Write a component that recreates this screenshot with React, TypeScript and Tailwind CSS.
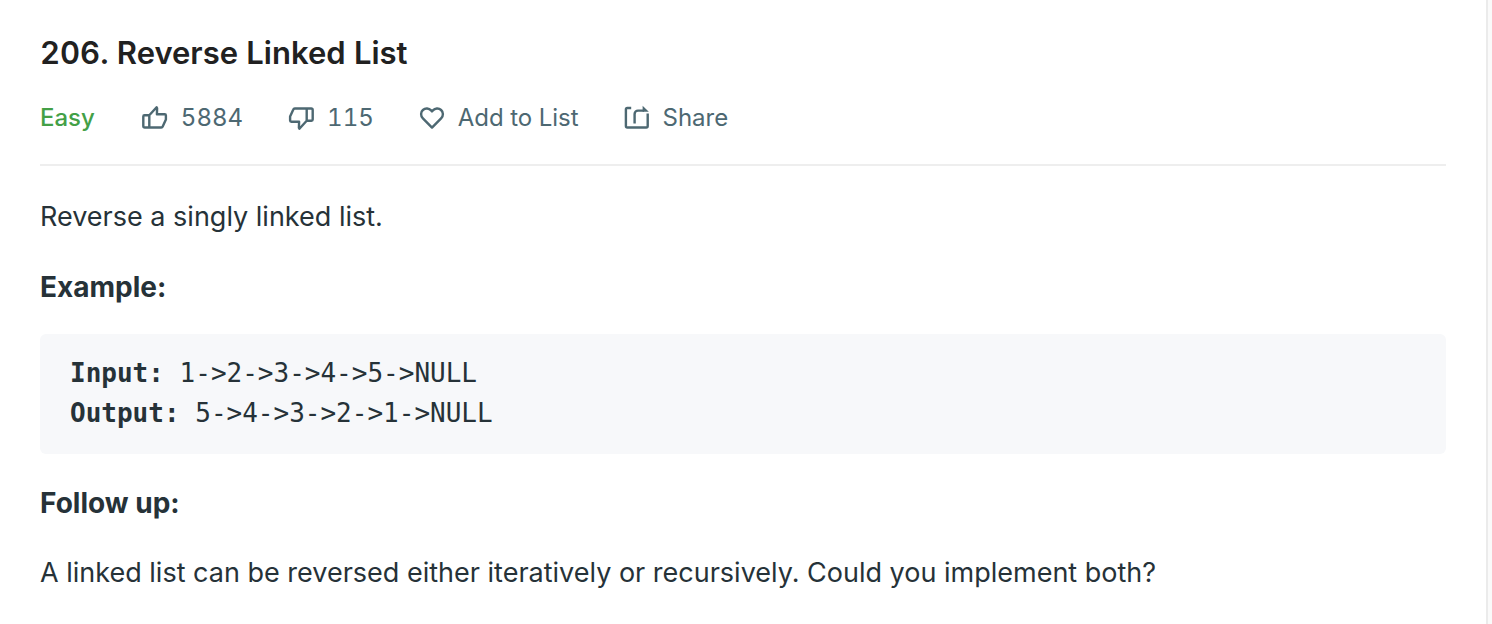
import type { ReactNode } from "react";

function Icon({ children }: { children: ReactNode }) {
  return (
    <svg
      className="size-7 shrink-0"
      viewBox="0 0 28 28"
      fill="none"
      stroke="currentColor"
      strokeWidth="2.4"
      strokeLinejoin="round"
      aria-hidden="true"
    >
      {children}
    </svg>
  );
}

const THUMB =
  "M8.3 11.2H3.5a1.2 1.2 0 0 0-1.2 1.2v9.6a1.5 1.5 0 0 0 1.5 1.5H20.2a1.6 1.6 0 0 0 1.5-1l3.2-7V11.4a1.2 1.2 0 0 0-1.2-1.2H15.9L16.1 4.2 15.6 3.2 8.3 11.2V23.5";

function Action({ label, icon, name }: { label: string; icon: ReactNode; name?: string }) {
  return (
    <button type="button" aria-label={name} className="flex items-center gap-3 text-2xl tabular-nums">
      {icon}
      <span>{label}</span>
    </button>
  );
}

export default function App() {
  return (
    <div className="flex min-h-screen bg-[#fafafa] font-['Inter',sans-serif] text-[#263238]">
      <main className="min-w-0 flex-1 border-r-2 border-[#ebebeb] bg-white px-10 pt-[33px]">
        <h1 className="text-[31px] leading-10 font-semibold text-[#212121] tabular-nums">
          206. Reverse Linked List
        </h1>

        <div className="mt-[27px] flex h-9 items-center text-[#4d6872]">
          <span className="mr-[46px] text-2xl font-medium text-[#43a047]">Easy</span>
          <div className="flex items-center gap-11">
            <Action
              name="Like, 5884"
              label="5884"
              icon={
                <Icon>
                  <path d={THUMB} />
                </Icon>
              }
            />
            <Action
              name="Dislike, 115"
              label="115"
              icon={
                <Icon>
                  <path d={THUMB} transform="rotate(180 14 14)" />
                </Icon>
              }
            />
            <Action
              label="Add to List"
              icon={
                <Icon>
                  <path d="M14 23.6 4.9 14.4C2.4 11.9 2.6 8 4.9 6c2.5-2.2 6.1-1.8 8.2.4l.9 1 .9-1c2.1-2.2 5.7-2.6 8.2-.4 2.3 2 2.5 5.9 0 8.4Z" />
                </Icon>
              }
            />
            <Action
              label="Share"
              icon={
                <Icon>
                  <path d="M8.2 4H4.3a1.4 1.4 0 0 0-1.4 1.4v16.7a1.4 1.4 0 0 0 1.4 1.4h19a1.4 1.4 0 0 0 1.4-1.4V9.6" />
                  <path d="M11.6 19.6V10a3.4 3.4 0 0 1 3.4-3.4h6" />
                  <path d="M19.6 1.8 25.8 7.8h-6.2Z" fill="currentColor" stroke="none" />
                </Icon>
              }
            />
          </div>
        </div>

        <hr className="mt-7 border-t-2 border-[#eeeeee]" />

        <div className="mt-[31px] text-[27px] leading-10">
          <p>Reverse a singly linked list.</p>
          <p className="mt-[30px] text-[28px] leading-10">
            <strong className="font-bold">Example:</strong>
          </p>
          <pre className="mt-[27px] rounded-md bg-[#f7f8fa] px-[30px] pt-[19px] pb-[21px] font-['DejaVu_Sans_Mono',monospace] text-[26px] leading-10">
            <strong>Input:</strong>
            {" 1->2->3->4->5->NULL\n"}
            <strong>Output:</strong>
            {" 5->4->3->2->1->NULL"}
          </pre>
          <p className="mt-[29px] text-[28px] leading-10">
            <strong className="font-bold">Follow up:</strong>
          </p>
          <p className="mt-[30px]">
            A linked list can be reversed either iteratively or recursively. Could you implement both?
          </p>
        </div>
      </main>
      <div className="w-1 shrink-0" />
    </div>
  );
}
